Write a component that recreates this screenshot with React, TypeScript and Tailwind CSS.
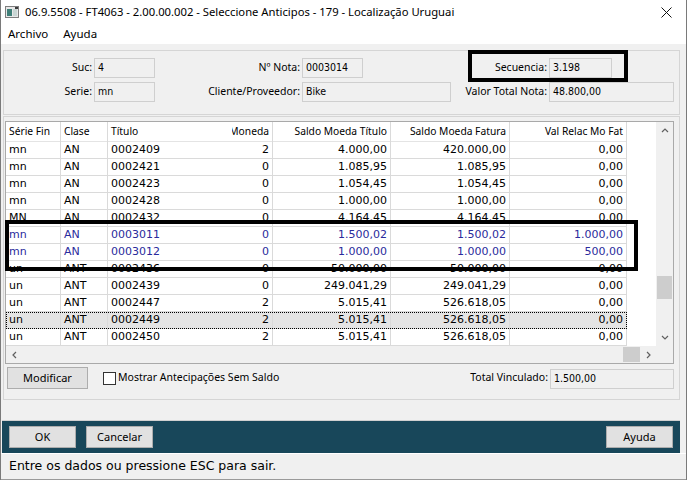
import React from "react";

type Row = {
  serie: string;
  clase: string;
  titulo: string;
  moneda: string;
  saldoTitulo: string;
  saldoFatura: string;
  valRelac: string;
  blue?: boolean;
  selected?: boolean;
};

const rows: Row[] = [
  { serie: "mn", clase: "AN", titulo: "0002409", moneda: "2", saldoTitulo: "4.000,00", saldoFatura: "420.000,00", valRelac: "0,00" },
  { serie: "mn", clase: "AN", titulo: "0002421", moneda: "0", saldoTitulo: "1.085,95", saldoFatura: "1.085,95", valRelac: "0,00" },
  { serie: "mn", clase: "AN", titulo: "0002423", moneda: "0", saldoTitulo: "1.054,45", saldoFatura: "1.054,45", valRelac: "0,00" },
  { serie: "mn", clase: "AN", titulo: "0002428", moneda: "0", saldoTitulo: "1.000,00", saldoFatura: "1.000,00", valRelac: "0,00" },
  { serie: "MN", clase: "AN", titulo: "0002432", moneda: "0", saldoTitulo: "4.164,45", saldoFatura: "4.164,45", valRelac: "0,00" },
  { serie: "mn", clase: "AN", titulo: "0003011", moneda: "0", saldoTitulo: "1.500,02", saldoFatura: "1.500,02", valRelac: "1.000,00", blue: true },
  { serie: "mn", clase: "AN", titulo: "0003012", moneda: "0", saldoTitulo: "1.000,00", saldoFatura: "1.000,00", valRelac: "500,00", blue: true },
  { serie: "un", clase: "ANT", titulo: "0002436", moneda: "0", saldoTitulo: "50.000,00", saldoFatura: "50.000,00", valRelac: "0,00" },
  { serie: "un", clase: "ANT", titulo: "0002439", moneda: "0", saldoTitulo: "249.041,29", saldoFatura: "249.041,29", valRelac: "0,00" },
  { serie: "un", clase: "ANT", titulo: "0002447", moneda: "2", saldoTitulo: "5.015,41", saldoFatura: "526.618,05", valRelac: "0,00" },
  { serie: "un", clase: "ANT", titulo: "0002449", moneda: "2", saldoTitulo: "5.015,41", saldoFatura: "526.618,05", valRelac: "0,00", selected: true },
  { serie: "un", clase: "ANT", titulo: "0002450", moneda: "2", saldoTitulo: "5.015,41", saldoFatura: "526.618,05", valRelac: "0,00" },
];

const ui = "font-['Noto_Sans',sans-serif] text-[10.5px]";
const hdr = "font-['Noto_Sans',sans-serif] text-[10.25px]";
const cols = "grid grid-cols-[55px_47px_124px_41px_118px_119px_117px]";

function Field({ value, className = "" }: { value: string; className?: string }) {
  return (
    <div
      className={`h-[20px] flex items-center px-[3px] bg-[#f0f0f0] border border-[#cfcfcf] font-['DejaVu_Sans',sans-serif] font-stretch-condensed text-[10.5px] text-black ${className}`}
    >
      {value}
    </div>
  );
}

function Label({ text }: { text: string }) {
  return <div className={`${ui} text-black text-right pr-[2px] whitespace-nowrap`}>{text}</div>;
}

function Button({ text, className = "" }: { text: string; className?: string }) {
  return (
    <button
      className={`h-[22px] bg-[#e1e1e1] border border-[#adadad] font-['Noto_Sans',sans-serif] text-[11px] text-black flex items-center justify-center ${className}`}
    >
      {text}
    </button>
  );
}

function Chevron({ dir }: { dir: "up" | "down" | "left" | "right" }) {
  const d = {
    up: "M1 5 L4 2 L7 5",
    down: "M1 2 L4 5 L7 2",
    left: "M5 1 L2 4 L5 7",
    right: "M2 1 L5 4 L2 7",
  }[dir];
  return (
    <svg width="8" height="8" viewBox="0 0 8 8">
      <path d={d} fill="none" stroke="#606060" strokeWidth="1.2" />
    </svg>
  );
}

function TitleBar() {
  return (
    <div className="h-[24px] bg-white flex items-center shrink-0">
      <svg width="14" height="12" viewBox="0 0 14 12" className="ml-[4px] mr-[6px]">
        <rect x="0.5" y="0.5" width="13" height="11" fill="#e8e8e8" stroke="#7d7d7d" />
        <rect x="2" y="3" width="5" height="7" fill="#3f7f78" />
        <rect x="8" y="3" width="4" height="7" fill="#c9d6d4" />
        <rect x="10" y="1" width="3" height="2" fill="#3b3b3b" />
      </svg>
      <span className="font-['Noto_Sans',sans-serif] text-[11.25px] text-black">
        06.9.5508 - FT4063 - 2.00.00.002 - Seleccione Anticipos - 179 - Localização Uruguai
      </span>
      <div className="flex-1" />
      <svg width="11" height="11" viewBox="0 0 11 11" className="mr-[14px]">
        <path d="M0.5 0.5 L10.5 10.5 M10.5 0.5 L0.5 10.5" stroke="#111" strokeWidth="1" />
      </svg>
    </div>
  );
}

function MenuBar() {
  return (
    <div className="h-[20px] bg-white flex items-center gap-[15px] pl-[7px] shrink-0 font-['Noto_Sans',sans-serif] text-[11.5px] text-black">
      <span>Archivo</span>
      <span>Ayuda</span>
    </div>
  );
}

function HeaderFields() {
  return (
    <div className="mt-[6px] ml-[2px] mr-[6px] h-[65px] border border-[#d5d5d5] bg-[#f0f0f0] pt-[7px]">
      <div className="grid grid-cols-[90px_61px_147px_149px_98px_125px] grid-rows-[20px_20px] gap-y-[4px] items-center">
        <Label text="Suc:" />
        <Field value="4" />
        <Label text="Nº Nota:" />
        <Field value="0003014" className="w-[61px]" />
        <Label text="Secuencia:" />
        <Field value="3.198" className="w-[63px]" />

        <Label text="Serie:" />
        <Field value="mn" />
        <Label text="Cliente/Proveedor:" />
        <Field value="Bike" />
        <Label text="Valor Total Nota:" />
        <Field value="48.800,00" />
      </div>
    </div>
  );
}

function DataGrid() {
  const cell = "h-[17px] flex items-center px-[3px] whitespace-nowrap overflow-hidden";
  const line = "border-r border-[#dadada]";
  const head = "h-[20px] flex items-center whitespace-nowrap overflow-hidden";
  return (
    <div className="mt-[4px] ml-[1px] w-[669px] h-[243px] border border-[#a9a9a9] bg-white flex flex-col">
      <div className="flex h-[224px]">
        <div className="w-[650px] flex flex-col">
          <div className={`${cols} w-[621px] h-[20px] border-b border-[#e4e4e4] ${hdr} text-black`}>
            <div className={`${head} px-[3px] ${line}`}>Série Fin</div>
            <div className={`${head} px-[3px] ${line}`}>Clase</div>
            <div className={`${head} px-[3px]`}>Título</div>
            <div className={`${head} justify-end pr-[3px] ${line}`}>Moneda</div>
            <div className={`${head} justify-end px-[3px] ${line}`}>Saldo Moeda Título</div>
            <div className={`${head} justify-end px-[3px] ${line}`}>Saldo Moeda Fatura</div>
            <div className={`${head} justify-end px-[3px] ${line}`}>Val Relac Mo Fat</div>
          </div>
          {rows.map((r) => (
            <div
              key={r.titulo}
              className={`${cols} w-[621px] h-[17px] font-['DejaVu_Sans',sans-serif] text-[11px] ${
                r.blue ? "text-[#2a2a9c]" : "text-black"
              } ${r.selected ? "bg-[#e4e4e4] outline-1 outline-dotted outline-black -outline-offset-1" : ""}`}
            >
              <div className={`${cell} ${line} border-b`}>{r.serie}</div>
              <div className={`${cell} ${line} border-b`}>{r.clase}</div>
              <div className={`${cell} border-b border-[#dadada]`}>{r.titulo}</div>
              <div className={`${cell} ${line} border-b justify-end`}>{r.moneda}</div>
              <div className={`${cell} ${line} border-b justify-end`}>{r.saldoTitulo}</div>
              <div className={`${cell} ${line} border-b justify-end`}>{r.saldoFatura}</div>
              <div className={`${cell} ${line} border-b justify-end`}>{r.valRelac}</div>
            </div>
          ))}
        </div>
        <div className="w-[17px] bg-[#f0f0f0] flex flex-col items-center">
          <div className="h-[17px] flex items-center justify-center"><Chevron dir="up" /></div>
          <div className="flex-1 w-full relative">
            <div className="absolute left-[1px] right-[1px] top-[137px] h-[23px] bg-[#cdcdcd]" />
          </div>
          <div className="h-[17px] flex items-center justify-center"><Chevron dir="down" /></div>
        </div>
      </div>
      <div className="h-[17px] flex bg-[#f0f0f0]">
        <div className="w-[17px] flex items-center justify-center"><Chevron dir="left" /></div>
        <div className="w-[600px]" />
        <div className="w-[17px] h-[15px] mt-[1px] bg-[#cdcdcd]" />
        <div className="w-[17px] flex items-center justify-center"><Chevron dir="right" /></div>
      </div>
    </div>
  );
}

function TableGroup() {
  return (
    <div className="mt-[1px] ml-[2px] mr-[6px] h-[284px] border border-[#d5d5d5] bg-[#f0f0f0] flex flex-col">
      <DataGrid />
      <div className="flex items-center mt-[3px] ml-[3px] mr-[5px]">
        <Button text="Modificar" className="w-[81px]" />
        <div className="ml-[15px] w-[13px] h-[13px] border border-[#333] bg-white" />
        <span className={`${ui} text-black ml-[2px]`}>Mostrar Antecipações Sem Saldo</span>
        <div className="flex-1" />
        <span className={`${ui} text-black mr-[2px]`}>Total Vinculado:</span>
        <Field value="1.500,00" className="w-[124px] mt-[2px]" />
      </div>
    </div>
  );
}

function Footer() {
  return (
    <div className="ml-[1px] mr-[6px] h-[33px] bg-[#18475a] border-t border-[#d0d0d0] flex items-center px-[7px] gap-[10px] shrink-0">
      <Button text="OK" className="w-[67px]" />
      <Button text="Cancelar" className="w-[67px]" />
      <div className="flex-1" />
      <Button text="Ayuda" className="w-[67px]" />
    </div>
  );
}

function StatusBar() {
  return (
    <div className="h-[27px] border-t border-white border-b border-b-[#9a9a9a] flex items-center pl-[8px] shrink-0 font-['DejaVu_Sans',sans-serif] text-[12.5px] text-black">
      Entre os dados ou pressione ESC para sair.
    </div>
  );
}

export default function App() {
  return (
    <div className="relative w-[687px] h-[480px] overflow-hidden bg-[#f0f0f0] border-l border-r border-[#7a7a7a] flex flex-col">
      <TitleBar />
      <MenuBar />
      <HeaderFields />
      <TableGroup />
      <div className="flex-1" />
      <Footer />
      <StatusBar />
      <div className="absolute left-[467px] top-[50px] w-[160px] h-[32px] border-4 border-black pointer-events-none" />
      <div className="absolute left-[4px] top-[220px] w-[633px] h-[51px] border-4 border-black pointer-events-none" />
    </div>
  );
}
